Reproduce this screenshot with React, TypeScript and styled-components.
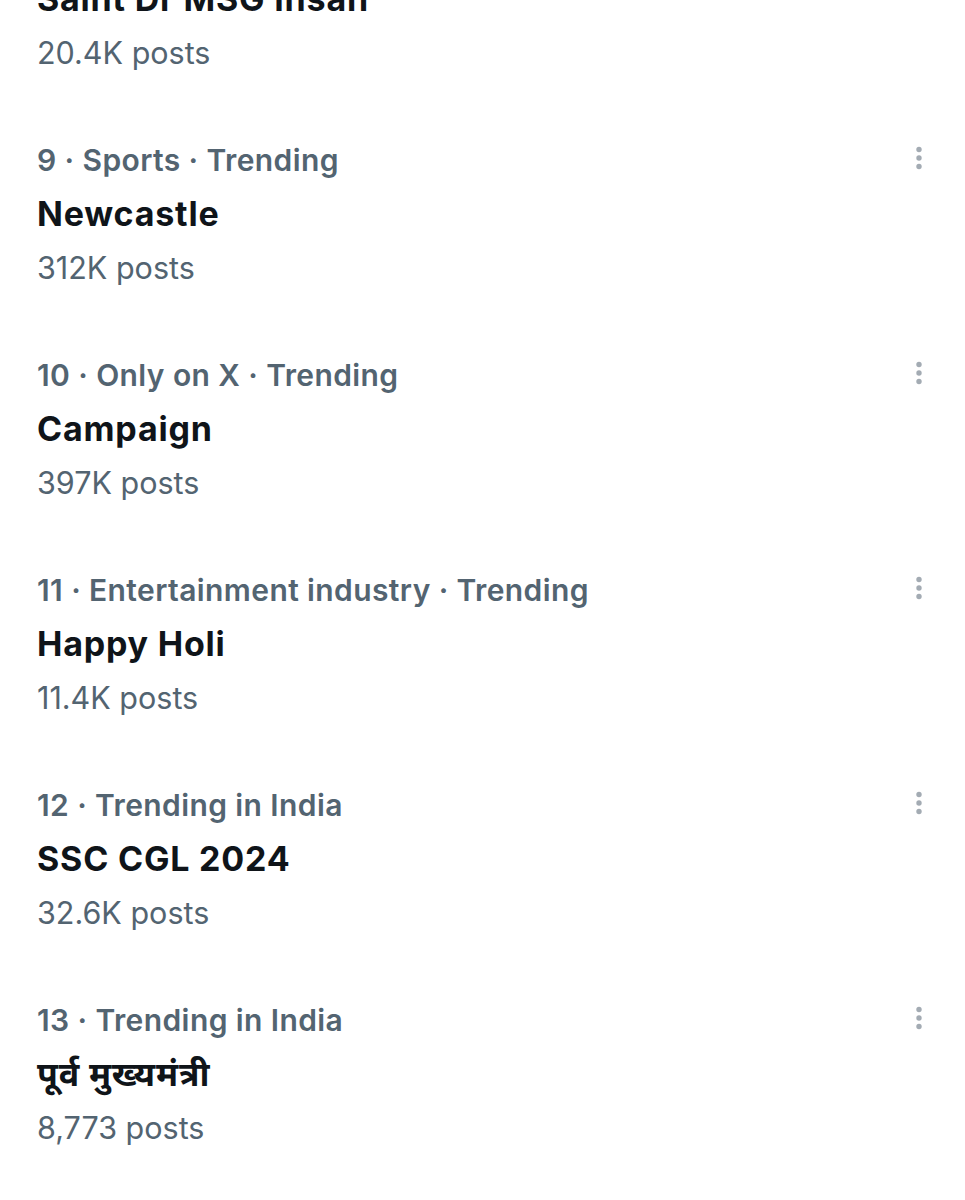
import styled, { createGlobalStyle } from 'styled-components';

const GlobalStyle = createGlobalStyle`
  body {
    margin: 0;
    background: #ffffff;
    font-family: Inter, "Noto Sans", "Liberation Sans", sans-serif;
    -webkit-font-smoothing: antialiased;
  }
`;

const TrendList = styled.div`
  display: flex;
  flex-direction: column;
  margin-top: -108px;
  overflow: hidden;
`;

const TrendRow = styled.div`
  display: flex;
  align-items: flex-start;
  justify-content: space-between;
  padding: 26px 26px 27px 37px;
`;

const TrendText = styled.div`
  display: flex;
  flex-direction: column;
`;

const Meta = styled.div`
  color: #536471;
  font-size: 30px;
  font-weight: 600;
  line-height: 54px;
  letter-spacing: 0.4px;
`;

const Title = styled.div`
  color: #0f1419;
  font-size: 34px;
  font-weight: 700;
  line-height: 54px;
  letter-spacing: 0.8px;
`;

const Posts = styled.div`
  color: #536471;
  font-size: 30.5px;
  font-weight: 400;
  line-height: 54px;
`;

const MoreButton = styled.button`
  width: 40px;
  height: 54px;
  border: 0;
  padding: 0;
  background: transparent;
  display: flex;
  align-items: center;
  justify-content: center;
  color: #a3abb3;
`;

const MoreIcon = () => (
  <svg width="8" height="30" viewBox="0 0 8 30" fill="currentColor">
    <circle cx="4" cy="4.5" r="2.7" />
    <circle cx="4" cy="13" r="2.7" />
    <circle cx="4" cy="21.5" r="2.7" />
  </svg>
);

const trends = [
  { meta: '8 · Trending in India', title: 'Saint Dr MSG Insan', posts: '20.4K posts' },
  { meta: '9 · Sports · Trending', title: 'Newcastle', posts: '312K posts' },
  { meta: '10 · Only on X · Trending', title: 'Campaign', posts: '397K posts' },
  { meta: '11 · Entertainment industry · Trending', title: 'Happy Holi', posts: '11.4K posts' },
  { meta: '12 · Trending in India', title: 'SSC CGL 2024', posts: '32.6K posts' },
  { meta: '13 · Trending in India', title: 'पूर्व मुख्यमंत्री', posts: '8,773 posts' },
];

const App = () => (
  <>
    <GlobalStyle />
    <TrendList>
      {trends.map((t) => (
        <TrendRow key={t.meta}>
          <TrendText>
            <Meta>{t.meta}</Meta>
            <Title>{t.title}</Title>
            <Posts>{t.posts}</Posts>
          </TrendText>
          <MoreButton aria-label="More">
            <MoreIcon />
          </MoreButton>
        </TrendRow>
      ))}
    </TrendList>
  </>
);

export default App;
